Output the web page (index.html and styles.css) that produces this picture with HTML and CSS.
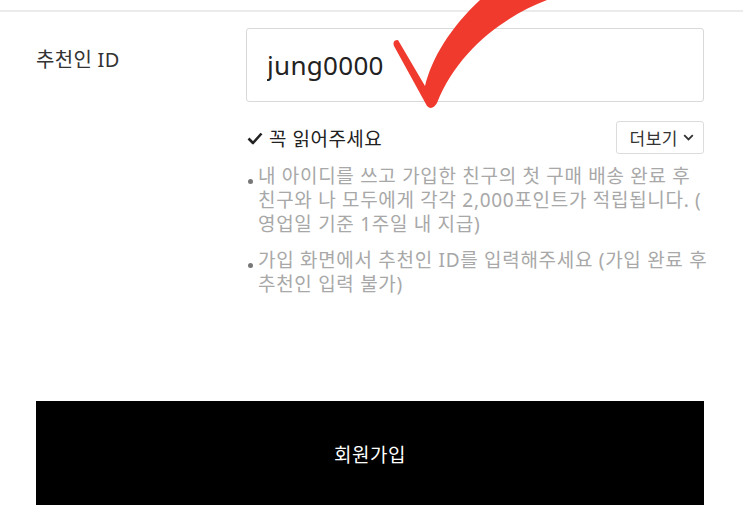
FILE: index.html
```html
<!DOCTYPE html>
<html lang="ko">
<head>
    <meta charset="UTF-8">
    <meta name="viewport" content="width=device-width, initial-scale=1.0">
    <title>회원가입</title>
    <link rel="stylesheet" href="styles.css">
</head>
<body>
    <div class="divider"></div>
    <div class="form-row">
        <label class="row-label" for="referrer">추천인 ID</label>
        <div class="row-field">
            <input type="text" id="referrer" class="text-input" value="jung0000">
            <div class="notice-head">
                <span class="notice-title">
                    <svg class="tick" width="16" height="13" viewBox="0 0 16 13"><path d="M1.5 6.5 L6 11 L14.5 1.5" fill="none" stroke="#222" stroke-width="2.6" stroke-linejoin="round"/></svg>꼭 읽어주세요
                </span>
                <button class="more-btn">더보기
                    <svg width="11" height="7" viewBox="0 0 11 7"><path d="M1.2 1.2 L5.5 5.5 L9.8 1.2" fill="none" stroke="#333" stroke-width="1.8"/></svg>
                </button>
            </div>
            <ul class="notes">
                <li>내 아이디를 쓰고 가입한 친구의 첫 구매 배송 완료 후 친구와 나 모두에게 각각 2,000포인트가 적립됩니다. ( 영업일 기준 1주일 내 지급)</li>
                <li>가입 화면에서 추천인 ID를 입력해주세요 (가입 완료 후 추천인 입력 불가)</li>
            </ul>
        </div>
    </div>
    <div class="submit-wrap">
        <button class="submit-btn">회원가입</button>
    </div>
    <!-- red check mark drawn over the form -->
    <svg class="mark" width="743" height="120" viewBox="0 0 743 120">
        <path d="M394 46 Q392 40 398 40 L425 86 C432 58 450 28 480 0 L547 0 C505 16 458 50 437 103 Q432 111 427 106 Z" fill="#f03a2e"/>
    </svg>
</body>
</html>
```

FILE: styles.css
```css
body {
    margin: 0;
    background: #fff;
    font-family: "Noto Sans", "Noto Sans CJK KR", sans-serif;
    color: #333;
    position: relative;
}
.divider {
    height: 2px;
    margin-top: 10px;
    background: #ebebeb;
}
.form-row {
    display: flex;
    padding: 16px 39px 0 36px;
}
.row-label {
    width: 210px;
    flex-shrink: 0;
    font-size: 20px;
    letter-spacing: 0.3px;
    color: #333;
    padding-top: 16px;
}
.row-field {
    flex: 1;
    min-width: 0;
}
.text-input {
    display: block;
    width: 100%;
    box-sizing: border-box;
    height: 74px;
    padding: 0 20px;
    border: 1px solid #d9d9d9;
    border-radius: 3px;
    font-family: "Noto Sans", sans-serif;
    font-size: 26px;
    letter-spacing: 0.3px;
    color: #222;
    outline: none;
}
.notice-head {
    display: flex;
    justify-content: space-between;
    align-items: center;
    margin-top: 19px;
}
.notice-title {
    display: flex;
    align-items: center;
    font-size: 19px;
    letter-spacing: 0.5px;
    color: #222;
}
.tick {
    margin: 1px 6px 0 1px;
}
.more-btn {
    height: 33px;
    padding: 0 9px 0 13px;
    border: 1px solid #dcdcdc;
    border-radius: 3px;
    background: #fff;
    font-family: "Noto Sans CJK KR", sans-serif;
    font-size: 17px;
    letter-spacing: 0.5px;
    color: #333;
    display: flex;
    align-items: center;
    gap: 5px;
}
.notes {
    list-style: none;
    margin: 10px -8px 0 0;
    padding: 0;
}
.notes li {
    position: relative;
    padding-left: 12px;
    font-size: 19px;
    letter-spacing: 0.7px;
    line-height: 24px;
    color: #a8a8a8;
    margin-bottom: 12px;
    word-break: keep-all;
}
.notes li::before {
    content: "";
    position: absolute;
    left: 2px;
    top: 15px;
    width: 5px;
    height: 5px;
    border-radius: 50%;
    background: #777;
}
.submit-wrap {
    padding: 93px 39px 0 36px;
}
.submit-btn {
    display: block;
    width: 100%;
    height: 104px;
    border: none;
    background: #000;
    color: #fff;
    font-family: "Noto Sans CJK KR", sans-serif;
    font-size: 19px;
    letter-spacing: 0.5px;
}
.mark {
    position: absolute;
    left: 0;
    top: 0;
    pointer-events: none;
}
```
